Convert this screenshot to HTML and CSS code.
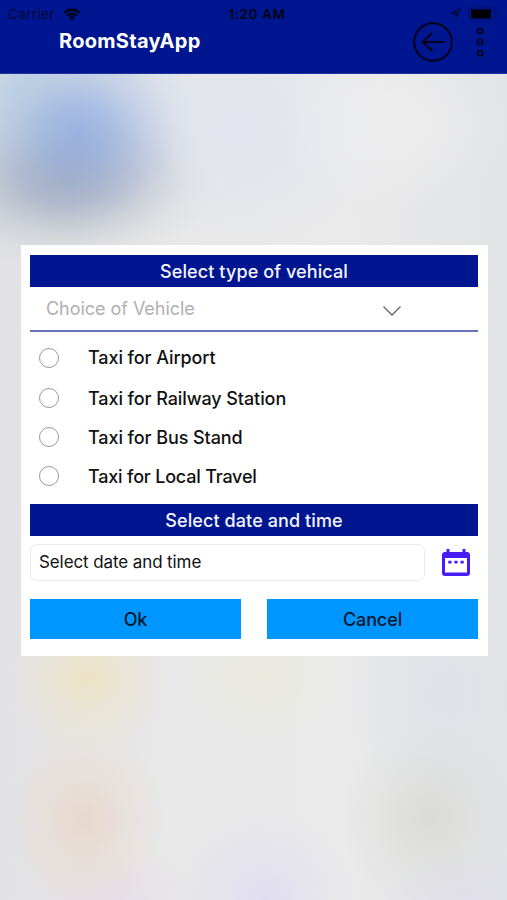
FILE: index.html
```
<!DOCTYPE html>
<html lang="en">
<head>
<meta charset="utf-8">
<title>RoomStayApp</title>
<link rel="stylesheet" href="styles.css">
</head>
<body>
<header class="header">
  <div class="status">
    <div class="status-left">
      <span class="carrier">Carrier</span>
      <svg class="wifi" width="18" height="13" viewBox="0 0 18 13"><g fill="none" stroke="#00020f" stroke-width="2.300"><path d="M1.500 4.700a10.600 10.600 0 0 1 15 0"/><path d="M4.300 7.700a6.600 6.600 0 0 1 9.400 0"/></g><path d="M9 12.300 6.200 9.500a4 4 0 0 1 5.600 0z" fill="#00020f"/></svg>
    </div>
    <span class="time">1:20 AM</span>
    <div class="status-right">
      <svg width="12" height="12" viewBox="0 0 12 12"><path d="M10.800 1.200 7 9.800V5.200H1.500z" fill="none" stroke="#000536" stroke-width="1.200"/></svg>
      <svg width="32" height="14" viewBox="0 0 32 14"><rect x=".5" y=".8" width="27" height="12.200" rx="2" fill="none" stroke="#000d70"/><rect x="3" y="2.400" width="20" height="9" fill="#000"/><path d="M29 4.800q2 2 0 4z" fill="#000d70" stroke="#000d70"/></svg>
    </div>
  </div>
  <div class="nav">
    <h1 class="title">RoomStayApp</h1>
    <svg class="back" width="40" height="40" viewBox="0 0 40 40" fill="none" stroke="#000317" stroke-width="1.900"><circle cx="20" cy="20" r="18.800"/><path d="M31.500 20H9.500M19.300 11 9.500 20l9.800 9"/></svg>
    <svg class="more" width="10" height="32" viewBox="0 0 10 32" fill="none" stroke="#000424" stroke-width="1.800"><circle cx="5" cy="5" r="2.600"/><circle cx="5" cy="16" r="2.600"/><circle cx="5" cy="27.200" r="2.600"/></svg>
  </div>
</header>
<main class="backdrop">
  <section class="dialog">
    <h2 class="band">Select type of vehical</h2>
    <div class="select">
      <span>Choice of Vehicle</span>
      <svg width="20" height="12" viewBox="0 0 20 12" fill="none" stroke="#666" stroke-width="1.300"><path d="M1.500 1.500 10 10l8.500-8.500"/></svg>
    </div>
    <div class="options">
      <div class="option"><i class="radio"></i><span>Taxi for Airport</span></div>
      <div class="option"><i class="radio"></i><span>Taxi for Railway Station</span></div>
      <div class="option"><i class="radio"></i><span>Taxi for Bus Stand</span></div>
      <div class="option"><i class="radio"></i><span class="tight">Taxi for Local Travel</span></div>
    </div>
    <h2 class="band band-date">Select date and time</h2>
    <div class="date-row">
      <div class="field"><span>Select date and time</span></div>
      <svg width="30" height="29" viewBox="0 0 30 29"><path d="M5.500 1h3v3h13V1h3v3h1.500a3 3 0 0 1 3 3v18a3 3 0 0 1-3 3H4a3 3 0 0 1-3-3V7a3 3 0 0 1 3-3h1.500zM4 10v14.500h22V10z" fill="#4a1cf5" fill-rule="evenodd"/><path d="M7.300 12.800h3.200v2.800H7.300zm6.100 0h3.200v2.800h-3.200zm6.100 0h3.200v2.800h-3.200z" fill="#4a1cf5"/></svg>
    </div>
    <div class="actions">
      <div class="button"><span>Ok</span></div>
      <div class="button"><span>Cancel</span></div>
    </div>
  </section>
</main>
</body>
</html>
```
FILE: styles.css
```
* { box-sizing: border-box; }
body { margin: 0; font-family: Inter, "Liberation Sans", sans-serif; color: #111; height: 900px; overflow: hidden; }
svg { display: block; flex: none; }

.header { height: 74px; background: #001690; border-bottom: 1px solid #1e329c; }
.status { height: 22px; padding: 6px 7px 0 8px; display: grid; grid-template-columns: 1fr auto 1fr; font-size: 13.5px; line-height: 16px; color: #00020f; }
.status-left, .status-right { display: flex; align-items: center; height: 16px; }
.status-left { gap: 8px; }
.status-right { justify-content: flex-end; gap: 7px; }
.carrier { color: #00062f; letter-spacing: .35px; }
.time { margin-left: 6px; font-weight: 600; font-size: 13.5px; letter-spacing: .6px; white-space: nowrap; }
.nav { height: 40px; display: flex; align-items: center; padding: 0 22px 0 59px; }
.title { margin: -2px auto 0 0; color: #fff; font-size: 20px; line-height: 24px; font-weight: 650; letter-spacing: .3px; }
.more { margin-left: 22px; }

.backdrop {
  height: 826px;
  padding: 171px 19.5px 0 20.5px;
  background:
    radial-gradient(ellipse 120px 110px at 80px 58px, rgba(130,163,225,.66), rgba(133,165,225,.55) 25%, rgba(145,170,225,.28) 55%, rgba(155,178,228,.08) 80%, rgba(160,180,225,0)),
    radial-gradient(ellipse 155px 88px at 66px 108px, rgba(120,130,150,.48), rgba(125,134,155,.4) 25%, rgba(138,145,162,.2) 55%, rgba(150,156,175,.06) 80%, rgba(160,165,185,0)),
    radial-gradient(ellipse 190px 170px at 15px 15px, rgba(180,210,226,.65), rgba(195,214,230,.3) 50%, rgba(200,215,230,0)),
    radial-gradient(ellipse 120px 85px at 395px 50px, rgba(240,240,240,.7), rgba(240,240,240,0)),
    radial-gradient(ellipse 170px 120px at 235px 55px, rgba(222,226,243,.6), rgba(224,227,240,0)),
    radial-gradient(ellipse 80px 75px at 88px 605px, rgba(237,226,192,.85), rgba(236,227,198,.5) 45%, rgba(236,228,200,0)),
    radial-gradient(ellipse 75px 60px at 262px 603px, rgba(234,233,216,.6), rgba(235,233,218,0)),
    radial-gradient(ellipse 80px 90px at 85px 746px, rgba(232,213,200,.85), rgba(234,217,205,.5) 45%, rgba(235,220,208,0)),
    radial-gradient(ellipse 90px 95px at 430px 745px, rgba(216,217,212,.85), rgba(219,220,216,.5) 45%, rgba(222,223,218,0)),
    radial-gradient(ellipse 90px 90px at 265px 826px, rgba(222,218,243,.8), rgba(224,221,241,.4) 50%, rgba(225,222,242,0)),
    radial-gradient(ellipse 85px 55px at 112px 826px, rgba(229,216,231,.6), rgba(230,220,232,0)),
    radial-gradient(ellipse 90px 130px at 440px 620px, rgba(220,224,230,.7), rgba(224,227,232,0)),
    radial-gradient(ellipse 85px 50px at 465px 826px, rgba(221,217,240,.5), rgba(225,222,235,0)),
    linear-gradient(90deg, #e2e2e4, #e8e8e8 32%, #eaeaea 68%, #e2e3e6);
}
.dialog { height: 411px; background: #fff; padding: 10px 9.5px 0; }
.band { margin: 0; height: 32px; line-height: 33px; background: #001690; color: #f5f5ff; text-align: center; font-size: 18px; font-weight: 500; letter-spacing: .1px; }
.select { height: 45px; padding: 3px 76px 3px 16px; border-bottom: 2px solid #6672bb; display: flex; align-items: center; justify-content: space-between; font-size: 18px; color: #b0b0b0; letter-spacing: -.04px; }
.select svg { margin-top: 5px; }
.options { display: grid; grid-template-rows: 42px 39px 39px 39px; padding: 5px 0 8px 9px; align-items: center; }
.option { display: flex; align-items: center; gap: 30px; font-size: 18px; font-weight: 500; line-height: 24px; letter-spacing: -.09px; }
.option:first-child { height: 42px; align-self: start; }
.tight { letter-spacing: -.2px; }
.radio { width: 20px; height: 20px; border: 1px solid #999; border-radius: 50%; margin: -1px -1px 0 0; }
.date-row { display: flex; align-items: center; padding: 8px 7px 0 0; justify-content: space-between; }
.field { width: 395px; height: 37px; border: 1px solid #eaeaea; border-radius: 7px; padding-left: 8px; line-height: 35px; font-size: 17px; letter-spacing: -.1px; }
.actions { display: grid; grid-template-columns: 1fr 1fr; gap: 26px; margin-top: 18px; }
.button { height: 40px; line-height: 41px; background: #0096ff; color: #06162c; text-align: center; font-size: 18px; font-weight: 500; letter-spacing: -.1px; }
```
